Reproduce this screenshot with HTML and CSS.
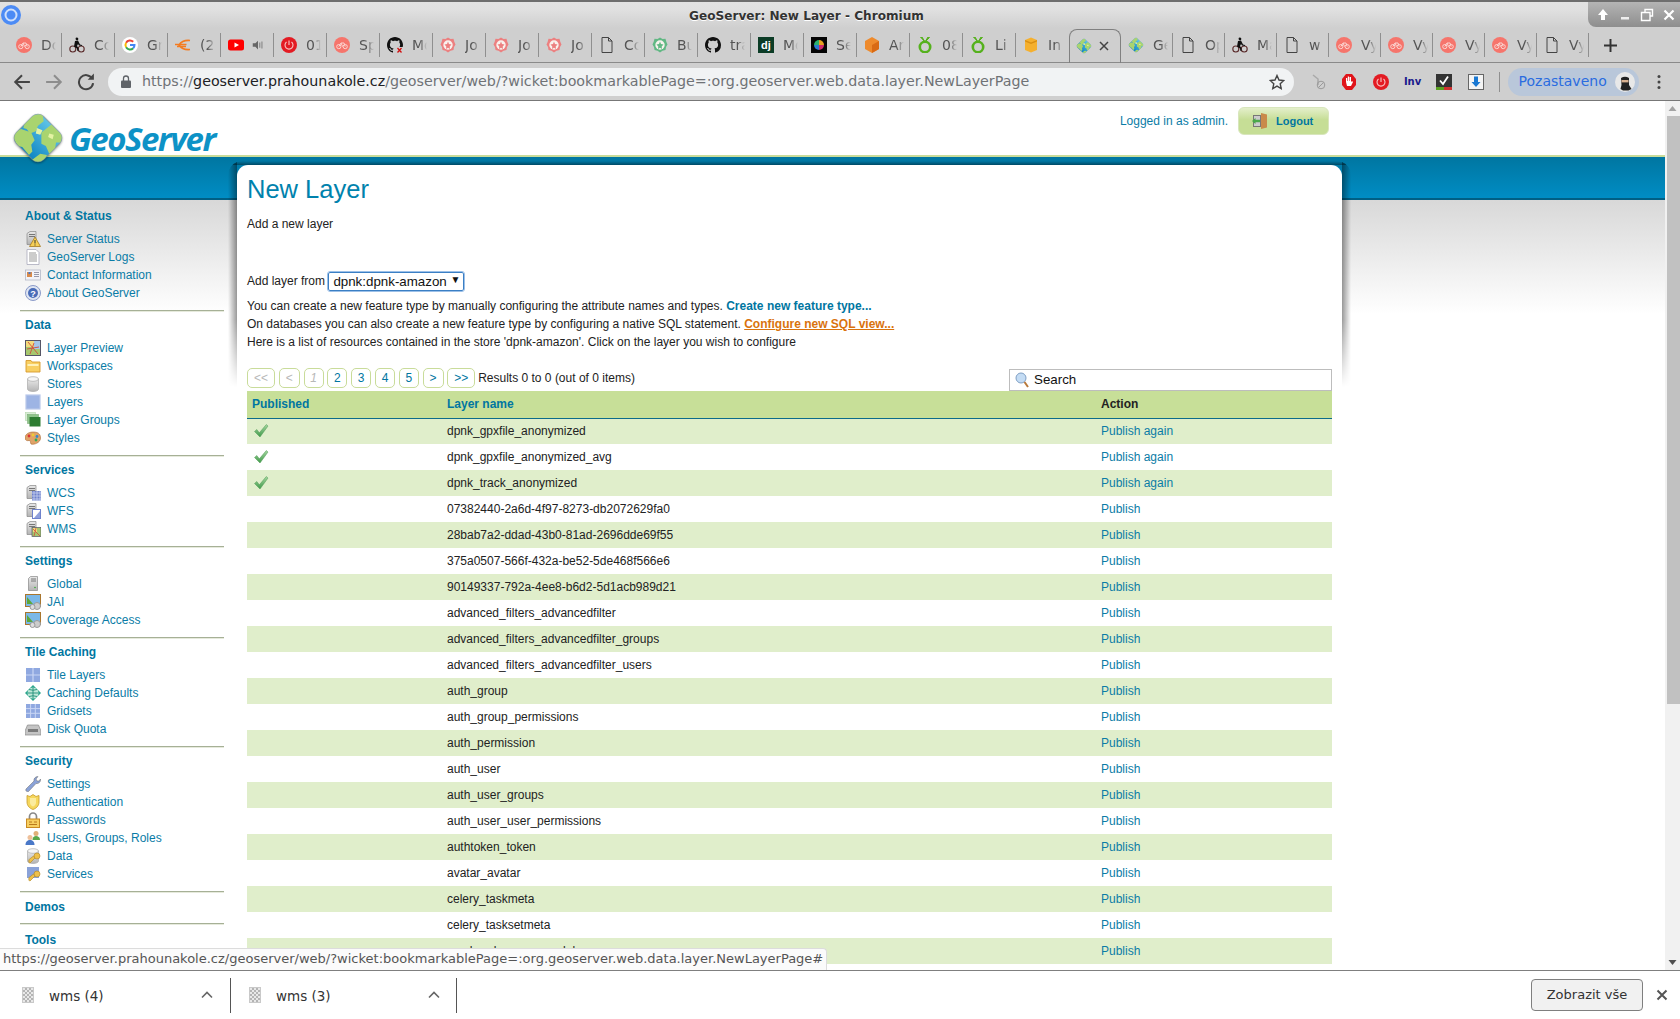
FILE: index.html
```html
<!DOCTYPE html>
<html lang="en">
<head>
<meta charset="utf-8">
<title>GeoServer: New Layer - Chromium</title>
<link rel="stylesheet" href="styles.css">
</head>
<body>
<svg class="defs" aria-hidden="true">
<defs>
<linearGradient id="g-sea" x1="0" y1="0" x2="0" y2="1"><stop offset="0" stop-color="#5fc3e6"/><stop offset="1" stop-color="#0f86c4"/></linearGradient>
<linearGradient id="g-card" x1="0" y1="0" x2="0" y2="1"><stop offset="0" stop-color="#e8e8e8"/><stop offset="1" stop-color="#b4b4b4"/></linearGradient>
<linearGradient id="g-check" x1="0" y1="0" x2="0" y2="1"><stop offset="0" stop-color="#a5d6a0"/><stop offset="1" stop-color="#3f9a4a"/></linearGradient>
<clipPath id="c-diamond"><rect x="7" y="7" width="34" height="34" rx="7" transform="rotate(45 24 24)"/></clipPath>
<symbol id="i-globe" viewBox="0 0 48 48">
<rect x="7" y="7" width="34" height="34" rx="7" transform="rotate(45 24 24)" fill="url(#g-sea)" stroke="#7f8f9a" stroke-opacity=".6"/>
<g clip-path="url(#c-diamond)">
<path d="M13 8l6-4 9-2 1 7-5 4-2 5-5 2-3-4-3-1zM0 20l9-4 9 3 3 7-3 4 1 6-3 3-6-7-4-1zM27 19l9-7 10 10-2 6-4 0-1 7-5 3-3-7-4-2 0-6zM18 44l8-6 6 1-4 9z" fill="#a9d46f"/>
<path d="M23 15l5 2-2 4-4-1zM34 20l4 1-1 4-4-2z" fill="#e4f3a4"/>
</g>
</symbol>
<symbol id="i-bike" viewBox="0 0 16 16"><circle cx="8" cy="8" r="8" fill="#f6756c"/><g fill="none" stroke="#fcd4d0"><circle cx="4.800" cy="9.600" r="2.100"/><circle cx="11.200" cy="9.600" r="2.100"/><path d="M4.800 9.600 7 6h3l1.200 3.600M7 6l1.600 3.600"/></g></symbol>
<symbol id="i-cyclist" viewBox="0 0 16 16"><g fill="none" stroke="#5b2b2b" stroke-width="1.100"><circle cx="3.800" cy="12" r="3"/><circle cx="12.200" cy="12" r="3"/></g><path d="M8 .5a1.400 1.400 0 1 1-.1 2.800A1.400 1.400 0 0 1 8 .5zM6 4l3-.5 2 4 2 .5v1l-3-.6-1-1.400-1 2 1.500 2v3h-1l-.6-2.500L5 9.500z" fill="#111"/></symbol>
<symbol id="i-google" viewBox="0 0 16 16"><circle cx="8" cy="8" r="8" fill="#fff"/><g fill="none" stroke-width="2"><path d="M4.100 5.700A4.500 4.500 0 0 1 11.200 4.800" stroke="#ea4335"/><path d="M4.100 5.700A4.500 4.500 0 0 0 4.100 10.300" stroke="#fbbc05"/><path d="M4.100 10.300A4.500 4.500 0 0 0 11.200 11.200" stroke="#34a853"/><path d="M11.200 11.200A4.500 4.500 0 0 0 12.500 8H8" stroke="#4285f4"/></g></symbol>
<symbol id="i-euro" viewBox="0 0 16 16"><path d="M15 3.500C10 3 6 5 4 8c2 3 6 5 11 4.500M0 7.500h11.500M2 9.500h9" fill="none" stroke="#f47b20" stroke-width="1.700"/></symbol>
<symbol id="i-yt" viewBox="0 0 16 16"><rect y="2.500" width="16" height="11" rx="2.500" fill="#f00"/><path d="M6.500 5.500v5L11 8z" fill="#fff"/></symbol>
<symbol id="i-speaker" viewBox="0 0 16 16"><path d="M2 6h3l3-3v10l-3-3H2z" fill="#666"/><path d="M10 5v6M12.500 4v8" stroke="#888" stroke-width="1.300"/></symbol>
<symbol id="i-power" viewBox="0 0 16 16"><circle cx="8" cy="8" r="8" fill="#e31b23"/><path d="M5.500 5a4 4 0 1 0 5 0M8 3.500V8" fill="none" stroke="#f9c6c6" stroke-width="1.100"/></symbol>
<symbol id="i-gh" viewBox="0 0 16 16"><path d="M8 0C3.580 0 0 3.580 0 8c0 3.540 2.290 6.530 5.470 7.590.4.07.55-.17.55-.38 0-.19-.01-.82-.01-1.490-2.010.37-2.530-.49-2.690-.94-.09-.23-.48-.94-.82-1.130-.28-.15-.68-.52-.01-.53.63-.01 1.080.58 1.230.82.72 1.210 1.870.87 2.330.66.07-.52.28-.87.51-1.070-1.780-.2-3.640-.89-3.640-3.950 0-.87.31-1.590.82-2.150-.08-.2-.36-1.020.08-2.120 0 0 .67-.21 2.200.82.64-.18 1.320-.27 2-.27s1.360.09 2 .27c1.530-1.040 2.200-.82 2.200-.82.44 1.100.16 1.920.08 2.120.51.56.82 1.270.82 2.150 0 3.070-1.870 3.750-3.650 3.950.29.25.54.73.54 1.480 0 1.070-.01 1.930-.01 2.200 0 .21.15.46.55.38A8.010 8.010 0 0 0 16 8c0-4.420-3.580-8-8-8z" fill="#111"/></symbol>
<symbol id="i-ghx" viewBox="0 0 16 16"><use href="#i-gh"/><path d="M9 10h7v6H9z" fill="#cfcfcf"/><path d="M10.500 11l4 4.500m0-4.500-4 4.500" stroke="#d01010" stroke-width="1.300"/></symbol>
<symbol id="i-rosette" viewBox="0 0 16 16"><path d="M8 .5l2.500 1.500 3-.2.8 3 1.200 2.700-1.500 2.500-.5 3-3 .7L8 15.500l-2.500-1.800-3-.7-.5-3L.5 7.500 1.700 4.800l.8-3 3 .2z" fill="currentColor"/><circle cx="8" cy="8" r="4.700" fill="#f9f2ee"/><path d="M8 4.500l1 2.500 2.500.5L9.700 9.500l.3 2.500L8 10.700 6 12l.3-2.500L4.500 7.500 7 7z" fill="currentColor"/></symbol>
<symbol id="i-doc" viewBox="0 0 16 16"><path d="M3 .5h6.500L13 4v11.500H3zM9.500.5V4H13" fill="none" stroke="#444"/></symbol>
<symbol id="i-dj" viewBox="0 0 16 16"><rect width="16" height="16" fill="#0c3c26"/><text x="8" y="12" text-anchor="middle" class="dj-glyph">dj</text></symbol>
<symbol id="i-wheel" viewBox="0 0 16 16"><rect width="16" height="16" fill="#050505"/><path d="M8 3a5 5 0 0 1 5 5H8z" fill="#e8a020"/><path d="M13 8a5 5 0 0 1-5 5V8z" fill="#d02a6a"/><path d="M8 13a5 5 0 0 1-5-5h5z" fill="#2c7ad0"/><path d="M3 8a5 5 0 0 1 5-5v5z" fill="#2ab070"/></symbol>
<symbol id="i-cube" viewBox="0 0 16 16"><path d="M8 0l7 4v8l-7 4-7-4V4z" fill="#ee8a2c"/><path d="M8 8l7-4v8l-7 4z" fill="#d96a14"/></symbol>
<symbol id="i-greeno" viewBox="0 0 16 16"><ellipse cx="8" cy="10" rx="5.200" ry="5.200" fill="none" stroke="#55b11d" stroke-width="2.600"/><path d="M8 5L3.500 0l1.500 0zM8 5l3-5 1.500.5z" fill="#55b11d" stroke="#55b11d"/></symbol>
<symbol id="i-box" viewBox="0 0 16 16"><path d="M2 3l6-2.500L14 3v10l-6 2.500L2 13z" fill="#f5b02e"/><path d="M2 3l6 2.500L14 3v1.500L8 7 2 4.500z" fill="#d98f14"/></symbol>
<symbol id="s-server" viewBox="0 0 16 16"><path d="M2 2.500l3-2h6v13H2z" fill="url(#g-card)" stroke="#888" stroke-width=".7"/><path d="M4 3.500h6M4 5.500h6" stroke="#777"/></symbol>
<symbol id="s-status" viewBox="0 0 16 16"><use href="#s-server"/><path d="M10 6l5.500 9.500h-11z" fill="#f6cf57" stroke="#a57a1f" stroke-width=".8"/><path d="M10 9v3.500M10 13.500v1" stroke="#333"/></symbol>
<symbol id="s-lines" viewBox="0 0 16 16"><path d="M2 .5h9L14 3.500v12H2z" fill="#fff" stroke="#aab" stroke-width=".8"/><path d="M4 4h7M4 6h8M4 8h8M4 10h8M4 12h8" stroke="#999"/></symbol>
<symbol id="s-contact" viewBox="0 0 16 16"><rect x=".5" y="3" width="15" height="10" fill="#f3f3f8" stroke="#b4b8c8" stroke-width=".8"/><rect x="2" y="5" width="5" height="5" fill="#d88a4a"/><rect x="3.500" y="5" width="2" height="2" fill="#4a78c8"/><path d="M9 5.500h5M9 7.500h5M9 9.500h5" stroke="#99a"/></symbol>
<symbol id="s-help" viewBox="0 0 16 16"><circle cx="8" cy="8" r="7.500" fill="#dfe5f2" stroke="#8a9ac8"/><circle cx="8" cy="8" r="5" fill="#4a6cb8"/><text x="8" y="11.500" text-anchor="middle" class="help-glyph">?</text></symbol>
<symbol id="s-map" viewBox="0 0 16 16"><rect x=".5" y=".5" width="15" height="15" fill="#a6c86e" stroke="#556"/><path d="M1 1h9v6H1z" fill="#f1da7c"/><path d="M9 1h6v8H9z" fill="#a4c6e8"/><path d="M3 2l10 12M9 3l-4 11M2 9l12-2" stroke="#d34a3a" stroke-width=".9"/></symbol>
<symbol id="s-folder" viewBox="0 0 16 16"><path d="M1 2.500h5l1 1.500h8v10H1z" fill="#f8cf62" stroke="#d79a2c" stroke-width=".9"/><path d="M2.500 6h11v2h-11z" fill="#fff1b8"/></symbol>
<symbol id="s-db" viewBox="0 0 16 16"><path d="M2.500 3v10c0 1.500 2.500 2.500 5.500 2.500s5.500-1 5.500-2.500V3z" fill="url(#g-card)" stroke="#aaa" stroke-width=".7"/><ellipse cx="8" cy="3" rx="5.500" ry="2.300" fill="#f5f5f5" stroke="#aaa" stroke-width=".7"/></symbol>
<symbol id="s-layer" viewBox="0 0 16 16"><rect x="1" y="1" width="14" height="14" fill="#9db4e4" stroke="#b9c8ea" stroke-width="1.200"/></symbol>
<symbol id="s-groups" viewBox="0 0 16 16"><rect x=".5" y=".5" width="10" height="8" fill="#d7ecd3" stroke="#b2d6ac" stroke-width=".6"/><rect x="2.500" y="2.500" width="11" height="9" fill="#8fc48b" stroke="#7aae76" stroke-width=".6"/><rect x="4.500" y="5" width="11" height="9.500" fill="#2e7d32"/></symbol>
<symbol id="s-palette" viewBox="0 0 16 16"><path d="M8 2C3.500 2 0 4.500 0 8c0 2.500 2.500 3 4 2.500 2-.5 1 2 2 3.500 2.500 1 9.500-1 9.500-6S12 2 8 2z" fill="#e0a367" stroke="#a86a35" stroke-width=".6"/><circle cx="4" cy="6" r="1.400" fill="#d33"/><circle cx="8" cy="5" r="1.400" fill="#ec3"/><circle cx="12" cy="6.500" r="1.400" fill="#38c"/><circle cx="11" cy="10" r="1.400" fill="#3a5"/></symbol>
<symbol id="s-wcs" viewBox="0 0 16 16"><use href="#s-server"/><rect x="7" y="6" width="9" height="9.500" fill="#6f82cc"/><path d="M7 8h9M7 11h9M7 14h9M9 6v10M12 6v10M15 6v10" stroke="#c9d2f0" stroke-width=".8"/></symbol>
<symbol id="s-wfs" viewBox="0 0 16 16"><use href="#s-server"/><rect x="7.500" y="6.500" width="8" height="9" fill="#fff" stroke="#6f82cc"/><path d="M15 8v7H9z" fill="#8fa0dc"/></symbol>
<symbol id="s-wms" viewBox="0 0 16 16"><use href="#s-server"/><rect x="7" y="6.500" width="9" height="9" fill="#a6c86e" stroke="#556" stroke-width=".7"/><path d="M8 7h4v4H8z" fill="#f1da7c"/><path d="M8 8l7 7M11 7l-2 8" stroke="#d34a3a" stroke-width=".8"/></symbol>
<symbol id="s-global" viewBox="0 0 16 16"><path d="M3.500 2.500l2-2h7v14h-9z" fill="url(#g-card)" stroke="#888" stroke-width=".7"/><path d="M6 3h5M6 5h5" stroke="#777"/><circle cx="10" cy="11.500" r=".8" fill="#3a3"/></symbol>
<symbol id="s-jai" viewBox="0 0 16 16"><rect x=".5" y=".5" width="15" height="12" fill="#7bb8e8" stroke="#a9762e"/><path d="M2 3l6 7H2z" fill="#5da83a"/><circle cx="12" cy="12" r="3.500" fill="#ccc" stroke="#999"/><circle cx="7.500" cy="13" r="2.500" fill="#ddd" stroke="#999"/></symbol>
<symbol id="s-tiles" viewBox="0 0 16 16"><rect x="1" y="1" width="14" height="14" fill="#8fa8e0"/><path d="M8 1v14M1 8h14" stroke="#c9d6f4" stroke-width="1.200"/></symbol>
<symbol id="s-cache" viewBox="0 0 16 16"><path d="M8 0l8 8-8 8-8-8z" fill="#2aa58c"/><circle cx="8" cy="8" r="5.500" fill="#bfe8d8"/><path d="M2.500 8h11M8 2.500v11M4 4.500q4 1.500 8 0M4 11.500q4-1.500 8 0" fill="none" stroke="#1f8f78" stroke-width=".9"/></symbol>
<symbol id="s-grid" viewBox="0 0 16 16"><rect x="1" y="1" width="14" height="14" fill="#8fa8e0"/><path d="M5.600 1v14M10.300 1v14M1 5.600h14M1 10.300h14" stroke="#c9d6f4"/></symbol>
<symbol id="s-disk" viewBox="0 0 16 16"><path d="M2.500 4h11L16 10v4H0v-4z" fill="#c4c4c4" stroke="#8a8a8a" stroke-width=".7"/><path d="M3 8h10v3H3z" fill="#7a7a7a"/></symbol>
<symbol id="s-wrench" viewBox="0 0 16 16"><path d="M1 13L9 5c-.5-2 1-4.500 4-4.500L11 3l1 2 2 0 1.500-2c.5 3-2 5-4.500 4.500L3.500 15.500c-1.500 1-3.500-1-2.500-2.500z" fill="#8aa2d8" stroke="#6a6a6a" stroke-width=".5"/></symbol>
<symbol id="s-shield" viewBox="0 0 16 16"><path d="M2 1.500l3 1L8 .5l3 2 3-1V8c0 4-3 6.500-6 7.500C5 14.500 2 12 2 8z" fill="#f6d75c" stroke="#c79a2c" stroke-width=".8"/><path d="M5 4h6v4.500c0 2-1.500 3.500-3 4-1.500-.5-3-2-3-4z" fill="#fbeb9e"/></symbol>
<symbol id="s-lock" viewBox="0 0 16 16"><path d="M4.500 7V4.500a3.500 3.500 0 0 1 7 0V7" fill="none" stroke="#888" stroke-width="1.700"/><rect x="1.500" y="7" width="13" height="8.500" fill="#f7cf60" stroke="#c98a22"/><path d="M4 10h3M9 10h3M4 12.500h8" stroke="#b8791c"/></symbol>
<symbol id="s-users" viewBox="0 0 16 16"><circle cx="11" cy="3.500" r="2.500" fill="#e0b078"/><path d="M7.500 10c0-3 1.500-4 3.500-4s4 1 4 4z" fill="#5aa84a"/><circle cx="5" cy="7.500" r="2.500" fill="#eec09a"/><path d="M.5 15c0-3.500 2-5 4.500-5s4.500 1.500 4.500 5z" fill="#4a78c8"/></symbol>
<symbol id="s-key" viewBox="0 0 16 16"><circle cx="12" cy="8" r="3" fill="#eec04a" stroke="#b08420" stroke-width=".6"/><path d="M10 10l-5 5-1.500-1 1-1-1-1 5-4z" fill="#eec04a" stroke="#b08420" stroke-width=".6"/></symbol>
<symbol id="s-dbkey" viewBox="0 0 16 16"><use href="#s-db"/><use href="#s-key"/></symbol>
<symbol id="s-layerkey" viewBox="0 0 16 16"><rect x="2" y="1" width="12" height="11" fill="#8aa2d8"/><use href="#s-key"/></symbol>
<symbol id="i-check" viewBox="0 0 16 16"><path d="M1.500 8.500l2.300-2L6.300 9.800 13.300 1.500l1.700 1.500L7 14z" fill="url(#g-check)" stroke="#4f9a52" stroke-width=".5"/></symbol>
</defs>
</svg>

<div class="window">
  <header class="titlebar">
    <svg class="chromium" viewBox="0 0 20 20"><circle cx="10" cy="10" r="10" fill="#4c8bf5"/><circle cx="10" cy="10" r="5.500" fill="none" stroke="#cfe0fb" stroke-width="2"/></svg>
    <div class="wintitle">GeoServer: New Layer - Chromium</div>
    <div class="wincontrols">
      <svg viewBox="0 0 14 14"><path d="M7 1l5 6H9v5H5V7H2z" fill="#fff"/></svg>
      <svg viewBox="0 0 14 14"><path d="M3 9h8v2.500H3z" fill="#eee"/></svg>
      <svg viewBox="0 0 14 14"><path d="M5 4V1.500h7.500V8H10M1.500 4.500H10V12.500H1.500z" fill="none" stroke="#fff" stroke-width="1.400"/></svg>
      <svg viewBox="0 0 14 14"><path d="M2.500 2.500l9 9m0-9-9 9" stroke="#fff" stroke-width="2.200"/></svg>
    </div>
  </header>

  <nav class="tabstrip">
    <div class="tab"><svg class="fav"><use href="#i-bike"/></svg><span class="tabtext">Do</span></div>
    <div class="tab"><svg class="fav"><use href="#i-cyclist"/></svg><span class="tabtext">Co</span></div>
    <div class="tab"><svg class="fav"><use href="#i-google"/></svg><span class="tabtext">Gr</span></div>
    <div class="tab"><svg class="fav"><use href="#i-euro"/></svg><span class="tabtext">(2</span></div>
    <div class="tab"><svg class="fav"><use href="#i-yt"/></svg><svg class="fav audio"><use href="#i-speaker"/></svg></div>
    <div class="tab"><svg class="fav"><use href="#i-power"/></svg><span class="tabtext">01</span></div>
    <div class="tab"><svg class="fav"><use href="#i-bike"/></svg><span class="tabtext">Sp</span></div>
    <div class="tab"><svg class="fav"><use href="#i-ghx"/></svg><span class="tabtext">Mo</span></div>
    <div class="tab"><svg class="fav rose"><use href="#i-rosette"/></svg><span class="tabtext">Jo</span></div>
    <div class="tab"><svg class="fav rose"><use href="#i-rosette"/></svg><span class="tabtext">Jo</span></div>
    <div class="tab"><svg class="fav rose"><use href="#i-rosette"/></svg><span class="tabtext">Jo</span></div>
    <div class="tab"><svg class="fav"><use href="#i-doc"/></svg><span class="tabtext">Co</span></div>
    <div class="tab"><svg class="fav leaf"><use href="#i-rosette"/></svg><span class="tabtext">Bu</span></div>
    <div class="tab"><svg class="fav"><use href="#i-gh"/></svg><span class="tabtext">tra</span></div>
    <div class="tab"><svg class="fav"><use href="#i-dj"/></svg><span class="tabtext">Mo</span></div>
    <div class="tab"><svg class="fav"><use href="#i-wheel"/></svg><span class="tabtext">Se</span></div>
    <div class="tab"><svg class="fav"><use href="#i-cube"/></svg><span class="tabtext">Ar</span></div>
    <div class="tab"><svg class="fav"><use href="#i-greeno"/></svg><span class="tabtext">08</span></div>
    <div class="tab"><svg class="fav"><use href="#i-greeno"/></svg><span class="tabtext">Li</span></div>
    <div class="tab before-active"><svg class="fav"><use href="#i-box"/></svg><span class="tabtext">In</span></div>
    <div class="tab active"><svg class="fav"><use href="#i-globe"/></svg><svg class="tabclose" viewBox="0 0 10 10"><path d="M1 1l8 8m0-8-8 8" stroke="#444" stroke-width="1.500"/></svg></div>
    <div class="tab"><svg class="fav"><use href="#i-globe"/></svg><span class="tabtext">Ge</span></div>
    <div class="tab"><svg class="fav"><use href="#i-doc"/></svg><span class="tabtext">Op</span></div>
    <div class="tab"><svg class="fav"><use href="#i-cyclist"/></svg><span class="tabtext">Ma</span></div>
    <div class="tab"><svg class="fav"><use href="#i-doc"/></svg><span class="tabtext">w</span></div>
    <div class="tab"><svg class="fav"><use href="#i-bike"/></svg><span class="tabtext">Vy</span></div>
    <div class="tab"><svg class="fav"><use href="#i-bike"/></svg><span class="tabtext">Vy</span></div>
    <div class="tab"><svg class="fav"><use href="#i-bike"/></svg><span class="tabtext">Vy</span></div>
    <div class="tab"><svg class="fav"><use href="#i-bike"/></svg><span class="tabtext">Vy</span></div>
    <div class="tab"><svg class="fav"><use href="#i-doc"/></svg><span class="tabtext">Vy</span></div>
    <svg class="newtab" viewBox="0 0 12 12"><path d="M6 0v12M0 6h12" stroke="#333" stroke-width="1.800"/></svg>
  </nav>

  <div class="toolbar">
    <svg class="navbtn" viewBox="0 0 16 16"><path d="M15 8H2M8 2L2 8l6 6" fill="none" stroke="#444" stroke-width="1.800"/></svg>
    <svg class="navbtn" viewBox="0 0 16 16"><path d="M1 8h13M8 2l6 6-6 6" fill="none" stroke="#8d8d8d" stroke-width="1.800"/></svg>
    <svg class="navbtn" viewBox="0 0 16 16"><path d="M13.500 5A6.300 6.300 0 1 0 14.300 9" fill="none" stroke="#444" stroke-width="1.800"/><path d="M9.500 6H15V.5z" fill="#444"/></svg>
    <div class="omnibox">
      <svg class="lock" viewBox="0 0 10 13"><path d="M2.500 6V3.500a2.500 2.500 0 0 1 5 0V6" fill="none" stroke="#5f6368" stroke-width="1.300"/><rect y="5.500" width="10" height="7.500" rx="1" fill="#5f6368"/></svg>
      <div class="url"><span class="url-dim">https://</span><span class="url-host">geoserver.prahounakole.cz</span><span class="url-dim">/geoserver/web/?wicket:bookmarkablePage=:org.geoserver.web.data.layer.NewLayerPage</span></div>
      <svg class="star" viewBox="0 0 16 16"><path d="M8 1.500l2 4.500 4.800.5-3.600 3.200 1 4.800L8 12.100 3.800 14.500l1-4.800L1.200 6.500 6 6z" fill="none" stroke="#444" stroke-width="1.400"/></svg>
    </div>
    <div class="ext"><svg viewBox="0 0 16 16"><path d="M3 1l5 4v6" fill="none" stroke="#a9a9a9" stroke-width="1.500"/><circle cx="11" cy="11" r="3.800" fill="none" stroke="#9a9a9a"/><path d="M8.500 13.500l5-5" stroke="#9a9a9a"/></svg></div>
    <div class="ext"><svg viewBox="0 0 16 16"><path d="M5 0h6l4 5v6l-4 5H5l-4-5V5z" fill="#e0141a"/><path d="M5 8V4h1.200v3h.6V2.500H8V7h.5V3H10v5l1-1 1 1-2 4H6z" fill="#fff"/></svg></div>
    <div class="ext"><svg viewBox="0 0 16 16"><use href="#i-power"/></svg></div>
    <div class="ext ext-inv">Inv</div>
    <div class="ext"><svg viewBox="0 0 16 16"><rect width="16" height="13" fill="#333"/><rect y="13" width="8" height="3" fill="#5aa020"/><rect x="8" y="13" width="8" height="3" fill="#d03030"/><path d="M4 6.500l3 3.500 5-7.500" fill="none" stroke="#fff" stroke-width="1.800"/></svg></div>
    <div class="ext"><svg viewBox="0 0 16 16"><rect x=".5" y=".5" width="15" height="15" fill="#f4f4f4" stroke="#666"/><path d="M6 2.500h4V8h2.500L8 13 3.500 8H6z" fill="#1a78d2"/></svg></div>
    <div class="toolsep"></div>
    <div class="profile">
      <span class="profile-text">Pozastaveno</span>
      <svg class="avatar" viewBox="0 0 20 20"><circle cx="10" cy="10" r="10" fill="#e8e8e8"/><path d="M6 6q4-2.500 8 0v7l2.500 4-3 1.500H8L5.500 17l1-4z" fill="#222"/><rect x="6.500" y="8" width="7" height="2.400" fill="#d8b090"/></svg>
    </div>
    <svg class="menu" viewBox="0 0 4 16"><circle cx="2" cy="2.500" r="1.500" fill="#444"/><circle cx="2" cy="8" r="1.500" fill="#444"/><circle cx="2" cy="13.500" r="1.500" fill="#444"/></svg>
  </div>

  <div class="viewport">
    <div class="page">
      <div class="masthead">
        <div class="logo"><svg class="logomark"><use href="#i-globe"/></svg><span class="logotext">GeoServer</span></div>
        <div class="login">
          <span class="login-text">Logged in as admin.</span>
          <a class="logout" href="#"><svg class="logout-icon" viewBox="0 0 16 16"><path d="M1 2h8v12H1z" fill="#777"/><path d="M2 3h6v10H2z" fill="#ccc"/><path d="M9 0l6 1.500v13L9 16z" fill="#c98a4a"/><path d="M0 8l3.500-3v1.800H8v2.400H3.500V11z" fill="#4aa84a"/></svg><span>Logout</span></a>
        </div>
      </div>
      <div class="band"></div>
      <div class="columns">
        <aside class="sidebar">
          <section class="navgroup">
            <h3>About &amp; Status</h3>
            <ul>
              <li><svg><use href="#s-status"/></svg><a href="#">Server Status</a></li>
              <li><svg><use href="#s-lines"/></svg><a href="#">GeoServer Logs</a></li>
              <li><svg><use href="#s-contact"/></svg><a href="#">Contact Information</a></li>
              <li><svg><use href="#s-help"/></svg><a href="#">About GeoServer</a></li>
            </ul>
          </section>
          <section class="navgroup">
            <h3>Data</h3>
            <ul>
              <li><svg><use href="#s-map"/></svg><a href="#">Layer Preview</a></li>
              <li><svg><use href="#s-folder"/></svg><a href="#">Workspaces</a></li>
              <li><svg><use href="#s-db"/></svg><a href="#">Stores</a></li>
              <li><svg><use href="#s-layer"/></svg><a href="#">Layers</a></li>
              <li><svg><use href="#s-groups"/></svg><a href="#">Layer Groups</a></li>
              <li><svg><use href="#s-palette"/></svg><a href="#">Styles</a></li>
            </ul>
          </section>
          <section class="navgroup">
            <h3>Services</h3>
            <ul>
              <li><svg><use href="#s-wcs"/></svg><a href="#">WCS</a></li>
              <li><svg><use href="#s-wfs"/></svg><a href="#">WFS</a></li>
              <li><svg><use href="#s-wms"/></svg><a href="#">WMS</a></li>
            </ul>
          </section>
          <section class="navgroup">
            <h3>Settings</h3>
            <ul>
              <li><svg><use href="#s-global"/></svg><a href="#">Global</a></li>
              <li><svg><use href="#s-jai"/></svg><a href="#">JAI</a></li>
              <li><svg><use href="#s-jai"/></svg><a href="#">Coverage Access</a></li>
            </ul>
          </section>
          <section class="navgroup">
            <h3>Tile Caching</h3>
            <ul>
              <li><svg><use href="#s-tiles"/></svg><a href="#">Tile Layers</a></li>
              <li><svg><use href="#s-cache"/></svg><a href="#">Caching Defaults</a></li>
              <li><svg><use href="#s-grid"/></svg><a href="#">Gridsets</a></li>
              <li><svg><use href="#s-disk"/></svg><a href="#">Disk Quota</a></li>
            </ul>
          </section>
          <section class="navgroup">
            <h3>Security</h3>
            <ul>
              <li><svg><use href="#s-wrench"/></svg><a href="#">Settings</a></li>
              <li><svg><use href="#s-shield"/></svg><a href="#">Authentication</a></li>
              <li><svg><use href="#s-lock"/></svg><a href="#">Passwords</a></li>
              <li><svg><use href="#s-users"/></svg><a href="#">Users, Groups, Roles</a></li>
              <li><svg><use href="#s-dbkey"/></svg><a href="#">Data</a></li>
              <li><svg><use href="#s-layerkey"/></svg><a href="#">Services</a></li>
            </ul>
          </section>
          <section class="navgroup solo"><h3>Demos</h3></section>
          <section class="navgroup solo"><h3>Tools</h3></section>
        </aside>

        <main class="card">
          <h1>New Layer</h1>
          <p class="subtitle">Add a new layer</p>
          <div class="storepick">Add layer from <span class="select">dpnk:dpnk-amazon<span class="select-arrow">▼</span></span></div>
          <p class="note">You can create a new feature type by manually configuring the attribute names and types. <a class="strong-link" href="#">Create new feature type...</a></p>
          <p class="note">On databases you can also create a new feature type by configuring a native SQL statement. <a class="sql-link" href="#">Configure new SQL view...</a></p>
          <p class="note">Here is a list of resources contained in the store 'dpnk-amazon'. Click on the layer you wish to configure</p>
          <div class="pagerbar">
            <div class="pager">
              <span class="pg off wide">&lt;&lt;</span>
              <span class="pg off mid">&lt;</span>
              <span class="pg off cur">1</span>
              <a class="pg" href="#">2</a>
              <a class="pg" href="#">3</a>
              <a class="pg" href="#">4</a>
              <a class="pg" href="#">5</a>
              <a class="pg mid" href="#">&gt;</a>
              <a class="pg wide" href="#">&gt;&gt;</a>
              <span class="results">Results 0 to 0 (out of 0 items)</span>
            </div>
            <div class="search">
              <svg viewBox="0 0 14 16"><circle cx="6" cy="6" r="5" fill="#c4dcf4" stroke="#7f9fc4"/><path d="M9.500 10l3.500 5" stroke="#b8783a" stroke-width="2"/></svg>
              <span>Search</span>
            </div>
          </div>
          <table class="layers">
            <colgroup><col class="c1"><col class="c2"><col class="c3"></colgroup>
            <thead><tr><th class="th-link">Published</th><th class="th-link">Layer name</th><th>Action</th></tr></thead>
            <tbody>
              <tr><td><svg class="check"><use href="#i-check"/></svg></td><td>dpnk_gpxfile_anonymized</td><td><a href="#">Publish again</a></td></tr>
              <tr><td><svg class="check"><use href="#i-check"/></svg></td><td>dpnk_gpxfile_anonymized_avg</td><td><a href="#">Publish again</a></td></tr>
              <tr><td><svg class="check"><use href="#i-check"/></svg></td><td>dpnk_track_anonymized</td><td><a href="#">Publish again</a></td></tr>
              <tr><td></td><td>07382440-2a6d-4f97-8273-db2072629fa0</td><td><a href="#">Publish</a></td></tr>
              <tr><td></td><td>28bab7a2-ddad-43b0-81ad-2696dde69f55</td><td><a href="#">Publish</a></td></tr>
              <tr><td></td><td>375a0507-566f-432a-be52-5de468f566e6</td><td><a href="#">Publish</a></td></tr>
              <tr><td></td><td>90149337-792a-4ee8-b6d2-5d1acb989d21</td><td><a href="#">Publish</a></td></tr>
              <tr><td></td><td>advanced_filters_advancedfilter</td><td><a href="#">Publish</a></td></tr>
              <tr><td></td><td>advanced_filters_advancedfilter_groups</td><td><a href="#">Publish</a></td></tr>
              <tr><td></td><td>advanced_filters_advancedfilter_users</td><td><a href="#">Publish</a></td></tr>
              <tr><td></td><td>auth_group</td><td><a href="#">Publish</a></td></tr>
              <tr><td></td><td>auth_group_permissions</td><td><a href="#">Publish</a></td></tr>
              <tr><td></td><td>auth_permission</td><td><a href="#">Publish</a></td></tr>
              <tr><td></td><td>auth_user</td><td><a href="#">Publish</a></td></tr>
              <tr><td></td><td>auth_user_groups</td><td><a href="#">Publish</a></td></tr>
              <tr><td></td><td>auth_user_user_permissions</td><td><a href="#">Publish</a></td></tr>
              <tr><td></td><td>authtoken_token</td><td><a href="#">Publish</a></td></tr>
              <tr><td></td><td>avatar_avatar</td><td><a href="#">Publish</a></td></tr>
              <tr><td></td><td>celery_taskmeta</td><td><a href="#">Publish</a></td></tr>
              <tr><td></td><td>celery_tasksetmeta</td><td><a href="#">Publish</a></td></tr>
              <tr><td></td><td>corsheaders_corsmodel</td><td><a href="#">Publish</a></td></tr>
            </tbody>
          </table>
        </main>
      </div>
    </div>
    <div class="scrollbar">
      <svg class="sb-arrow" viewBox="0 0 15 15"><path d="M3.500 10h8l-4-5z" fill="#a3a3a3"/></svg>
      <div class="sb-track"><div class="sb-thumb"></div></div>
      <svg class="sb-arrow" viewBox="0 0 15 15"><path d="M3.500 5h8l-4 5z" fill="#505050"/></svg>
    </div>
  </div>

  <footer class="downloads">
    <div class="dl">
      <span class="dl-icon"></span><span class="dl-name">wms (4)</span>
      <svg class="dl-chevron" viewBox="0 0 12 8"><path d="M1 6.500l5-5 5 5" fill="none" stroke="#666" stroke-width="1.600"/></svg>
    </div>
    <div class="dl">
      <span class="dl-icon"></span><span class="dl-name">wms (3)</span>
      <svg class="dl-chevron" viewBox="0 0 12 8"><path d="M1 6.500l5-5 5 5" fill="none" stroke="#666" stroke-width="1.600"/></svg>
    </div>
    <button class="showall">Zobrazit vše</button>
    <svg class="dl-close" viewBox="0 0 12 12"><path d="M1.500 1.500l9 9m0-9-9 9" stroke="#555" stroke-width="2"/></svg>
  </footer>

  <div class="statusbubble">https://geoserver.prahounakole.cz/geoserver/web/?wicket:bookmarkablePage=:org.geoserver.web.data.layer.NewLayerPage#</div>
</div>
</body>
</html>
```
FILE: styles.css
```css
* { box-sizing: border-box; }
html, body { margin: 0; height: 100%; overflow: hidden; }
body { font-family: "Liberation Sans", Arial, sans-serif; font-size: 12px; color: #222; background: #fff; }
.defs { display: block; width: 0; height: 0; overflow: hidden; }
.dj-glyph { font: bold 11px "Liberation Sans", sans-serif; fill: #fff; }
.help-glyph { font: bold 9px "Liberation Sans", sans-serif; fill: #fff; }

.window { width: 1680px; height: 1019px; display: flex; flex-direction: column; position: relative; overflow: hidden; }

/* window title */
.titlebar { height: 28px; flex: none; display: flex; align-items: flex-start; border-top: 2px solid #6e6e6e; background: linear-gradient(#e2e2e2, #e0e0e0 30%, #cfcfcf 100%); }
.chromium { width: 20px; height: 20px; flex: none; margin: 3px 0 0 1px; }
.wintitle { flex: 1; height: 26px; text-align: center; padding-left: 4px; font: bold 12.1px/28px "DejaVu Sans", sans-serif; color: #333; text-shadow: 0 1px 0 #fff; }
.wincontrols { width: 92px; height: 25px; flex: none; display: flex; align-items: center; gap: 8px; padding-left: 8px; border-radius: 0 0 0 8px; background: linear-gradient(#b4b4b4, #8e8e8e); }
.wincontrols svg { width: 14px; height: 14px; flex: none; }

/* tabs */
.tabstrip { height: 35px; flex: none; display: flex; align-items: center; padding-left: 9px; background: #cfcfcf; border-bottom: 1px solid #8a8a8a; }
.tab { width: 53px; height: 24px; flex: none; display: flex; align-items: center; padding-left: 7px; gap: 9px; border-right: 1px solid #8f8f8f; }
.active ~ .tab { width: 52px; }
.fav { width: 16px; height: 16px; flex: none; }
.audio { width: 14px; height: 14px; margin-left: -2px; }
.rose { color: #ec8080; }
.leaf { color: #62b884; }
.tabtext { width: 15px; overflow: hidden; white-space: nowrap; font: 14px "DejaVu Sans", sans-serif; color: #555; -webkit-mask-image: linear-gradient(to right, #000 50%, transparent); mask-image: linear-gradient(to right, #000 50%, transparent); }
.before-active { border-right: 0; }
.tab.active { width: 52px; height: 35px; margin-top: 1px; margin-bottom: -1px; border: 1px solid #808080; border-bottom: 1px solid #cfcfcf; border-radius: 8px 8px 0 0; padding-left: 6px; gap: 7px; }
.tabclose { width: 10px; height: 10px; flex: none; }
.newtab { width: 13px; height: 13px; flex: none; margin-left: 14.5px; }

/* toolbar */
.toolbar { height: 38px; flex: none; display: flex; align-items: center; padding-left: 13px; background: #cfcfcf; border-bottom: 1px solid #777; }
.navbtn { width: 18px; height: 18px; flex: none; margin-right: 14px; }
.omnibox { width: 1186px; height: 28px; flex: none; margin: 0 8px 0 -1px; display: flex; align-items: center; padding: 0 9px 0 13px; border-radius: 14px; background: #f1f3f4; }
.lock { width: 10px; height: 13px; flex: none; }
.url { flex: 1; margin-left: 11px; padding-bottom: 2px; white-space: nowrap; overflow: hidden; font: 14.25px "DejaVu Sans", sans-serif; color: #777; }
.url-dim { color: #6f7276; }
.url-host { color: #202124; }
.star { width: 16px; height: 16px; flex: none; }
.ext { width: 31.6px; height: 28px; flex: none; display: flex; align-items: center; justify-content: center; }
.ext svg { width: 16px; height: 16px; }
.ext-inv { font: bold 10px "DejaVu Sans", sans-serif; color: #1a1a8c; }
.toolsep { width: 1px; height: 20px; flex: none; margin: 0 8px 0 7px; background: #8f8f8f; }
.profile { width: 131px; height: 28px; flex: none; display: flex; align-items: center; justify-content: space-between; padding: 0 4px 0 11px; border-radius: 14px; background: #b9c7da; }
.profile-text { padding-bottom: 2px; font: 14px "DejaVu Sans", sans-serif; color: #2a6ce0; }
.avatar { width: 20px; height: 20px; flex: none; }
.menu { width: 4px; height: 16px; flex: none; margin-left: 18px; }

/* viewport */
.viewport { flex: 1; min-height: 0; display: flex; }
.page { flex: 1; min-width: 0; overflow: hidden; background: linear-gradient(#d8d8d8, #fff) no-repeat 0 99px / 100% 114px; }
.masthead { height: 56px; display: flex; justify-content: space-between; background: #fff; border-bottom: 2px solid #c9dc9a; }
.logo { display: flex; align-items: flex-start; padding: 10px 0 0 11px; }
.logomark { width: 54px; height: 54px; flex: none; position: relative; z-index: 3; filter: drop-shadow(0 1px 1px rgba(0,0,0,.4)); }
.logotext { margin: 8px 0 0 4px; font: italic 700 33px/40px "Open Sans", sans-serif; color: #0d92c6; letter-spacing: -1.5px; }
.login { display: flex; align-items: flex-start; padding: 6px 336px 0 0; }
.login-text { margin: 6px 10px 0 0; color: #0a7ca6; line-height: 16px; }
.logout { width: 91px; height: 28px; display: flex; align-items: center; gap: 8px; padding-left: 13px; border: 1px solid #d8e6bc; border-radius: 6px; background: linear-gradient(#e4efcb, #c6de96 45%); font-size: 11px; font-weight: bold; color: #0076a1; text-decoration: none; }
.logout-icon { width: 16px; height: 16px; flex: none; }
.band { height: 43px; background: linear-gradient(#0076a1, #008dc4); border-bottom: 2px solid #005f84; }
.columns { display: flex; margin-top: -35px; position: relative; isolation: isolate; }

/* sidebar */
.sidebar { width: 237px; flex: none; padding: 42px 0 0 20px; }
.navgroup { width: 204px; padding-bottom: 8px; border-bottom: 1px solid #a6b096; box-shadow: 0 1px 0 #e6eadc; margin-bottom: 5px; }
.navgroup.solo { padding-top: 1px; padding-bottom: 7px; }
.navgroup.solo + .solo { padding-top: 2px; }
.navgroup h3 { margin: 0; padding-left: 5px; font-size: 12px; line-height: 18px; color: #0076a1; }
.navgroup ul { list-style: none; margin: 5px 0 0; padding: 0 0 0 5px; }
.navgroup li { height: 18px; display: flex; align-items: center; gap: 6px; }
.navgroup li svg { width: 16px; height: 16px; flex: none; }
.navgroup a { color: #0a7ca6; text-decoration: none; }

/* card */
.card { width: 1105px; flex: none; padding: 9px 10px 0; position: relative; background: #fff; border-radius: 11px 11px 0 0; }
.card::before { content: ""; position: absolute; z-index: -1; left: -9px; right: -9px; top: -4px; height: 226px; border-radius: 14px 14px 0 0; background: linear-gradient(to right, transparent, rgba(0,0,0,.4)) left / 9px 100% no-repeat, linear-gradient(to left, transparent, rgba(0,0,0,.4)) right / 9px 100% no-repeat, linear-gradient(to bottom, transparent, rgba(0,0,0,.4)) top / 100% 4px no-repeat; -webkit-mask-image: linear-gradient(#000 70%, transparent); mask-image: linear-gradient(#000 70%, transparent); }
.card h1 { margin: 0; font-size: 25.5px; font-weight: normal; line-height: 30px; color: #0082ad; }
.subtitle { margin: 11px 0 0; line-height: 18px; }
.storepick { margin-top: 38px; height: 20px; display: flex; align-items: center; white-space: pre; margin-bottom: 6px; }
.select { width: 136px; height: 19px; display: flex; align-items: center; justify-content: space-between; padding: 0 3px 0 4px; border: 1px solid #3b7fc4; border-radius: 2px; outline: 1px solid #9cc0e8; background: #fff; font-size: 13.33px; color: #111; }
.select-arrow { font-size: 10px; line-height: 12px; margin-top: -3px; }
.note { margin: 0; line-height: 18px; }
.strong-link { color: #0076a1; font-weight: bold; text-decoration: none; }
.sql-link { color: #d9730d; font-weight: bold; }
.pagerbar { margin-top: 17px; height: 23px; margin-bottom: 1px; display: flex; justify-content: space-between; align-items: flex-start; }
.pager { display: flex; align-items: center; height: 20px; gap: 3.8px; }
.pg { width: 20px; height: 20px; display: flex; align-items: center; justify-content: center; border: 1px solid #c9dc9a; border-radius: 5px; background: #fff; color: #0076a1; text-decoration: none; }
.pg.off { color: #b8b8b8; }
.pg.cur { font-style: italic; }
.pg.mid { width: 21px; }
.pg.wide { width: 28px; }
.results { margin-left: -1px; }
.search { width: 323px; height: 22px; margin-top: 1px; display: flex; align-items: center; gap: 5px; padding: 0 0 1px 5px; border: 1px solid #bdbdbd; font-size: 13.33px; color: #111; }
.search svg { width: 14px; height: 16px; flex: none; }

/* table */
.layers { width: 1085px; table-layout: fixed; border-collapse: collapse; margin-top: -1px; }
.c1 { width: 195px; }
.c2 { width: 654px; }
.c3 { width: 236px; }
.layers th { height: 27px; padding: 0 5px; text-align: left; font-size: 12px; background: #c7df98; border-bottom: 1px solid #0b6b8a; color: #222; }
.layers th.th-link { color: #0076a1; }
.layers td { height: 26px; padding: 0 5px; vertical-align: middle; line-height: 16px; }
.layers tbody tr:nth-child(odd) td { background: #e0eecb; }
.layers a { color: #0a7ca6; text-decoration: none; }
.check { width: 16px; height: 16px; display: block; margin-left: 1px; }

/* scrollbar */
.scrollbar { width: 15px; flex: none; display: flex; flex-direction: column; background: #f1f1f1; }
.sb-arrow { width: 15px; height: 15px; flex: none; }
.sb-track { flex: 1; }
.sb-thumb { height: 588px; margin-left: 2px; background: #c1c1c1; }

/* download bar */
.downloads { height: 49px; flex: none; display: flex; align-items: center; background: #fff; border-top: 1px solid #7f7f7f; position: relative; }
.dl { width: 226px; height: 35px; flex: none; display: flex; align-items: center; padding-left: 18px; border-right: 1px solid #555; }
.dl:first-child { width: 231px; padding-left: 22px; }
.dl-icon { width: 12px; height: 16px; flex: none; border: 1px solid #c9c9c9; background: repeating-conic-gradient(#b4b4b4 0 25%, #e8e8e8 0 50%) 0 0 / 4px 4px; }
.dl-name { width: 146px; margin-left: 15px; padding-top: 1px; font: 13.5px "DejaVu Sans", sans-serif; color: #333; }
.dl-chevron { width: 12px; height: 8px; flex: none; margin-left: 6px; }
.showall { width: 112px; height: 32px; flex: none; margin-left: auto; padding: 0 0 2px; border: 1px solid #7f7f7f; border-radius: 4px; background: #f1f1f1; font: 13px "DejaVu Sans", sans-serif; color: #333; }
.dl-close { width: 12px; height: 12px; flex: none; margin: 0 12px 0 13px; }
.statusbubble { position: absolute; left: 0; top: 948px; width: 827px; height: 22px; padding-left: 3px; font: 13px/20px "DejaVu Sans", sans-serif; color: #555; white-space: nowrap; background: #fbfbfb; border: 1px solid #dcdcdc; border-width: 1px 1px 0 0; border-radius: 0 4px 0 0; }
```
